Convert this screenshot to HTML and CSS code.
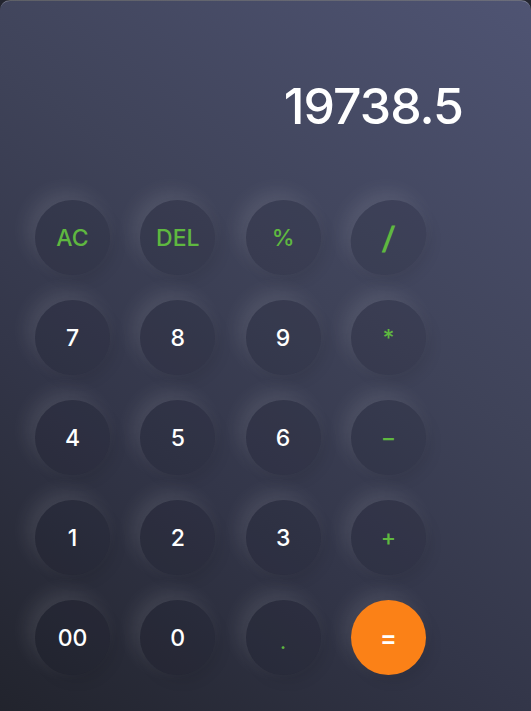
FILE: index.html
```html
<!DOCTYPE html>
<html lang="en">
<head>
<meta charset="utf-8">
<title>Calculator</title>
<link rel="stylesheet" href="styles.css">
</head>
<body>
<div class="calc">
  <div class="display"><span class="value">19738.5</span></div>
  <div class="keys">
    <button class="key op">AC</button>
    <button class="key op">DEL</button>
    <button class="key op">%</button>
    <button class="key op slash">/</button>
    <button class="key">7</button>
    <button class="key">8</button>
    <button class="key">9</button>
    <button class="key op">*</button>
    <button class="key">4</button>
    <button class="key">5</button>
    <button class="key">6</button>
    <button class="key op">−</button>
    <button class="key">1</button>
    <button class="key">2</button>
    <button class="key">3</button>
    <button class="key op">+</button>
    <button class="key">00</button>
    <button class="key">0</button>
    <button class="key op dot">.</button>
    <button class="key equal">=</button>
  </div>
</div>
</body>
</html>
```
FILE: styles.css
```css
* { box-sizing: border-box; }
html, body { margin: 0; padding: 0; background: #23252f; }
body { width: 531px; height: 711px; overflow: hidden; font-family: "Inter", "Open Sans", sans-serif; }

.calc {
  width: 531px;
  height: 720px;
  border-radius: 10px;
  border-top: 1px solid rgba(255,255,255,0.28);
  background: linear-gradient(35deg, #21232c 0%, #333649 35%, #3f4359 60%, #4f5473 100%);
}

.display {
  height: 199px;
  margin: 0 30px;
  padding: 80px 38px 0 0;
  text-align: right;
}
.value {
  color: #ffffff;
  font-size: 50px;
  font-weight: 500;
  letter-spacing: -1px;
  line-height: 1;
}

.keys {
  display: grid;
  grid-template-columns: repeat(4, 75px);
  grid-auto-rows: 75px;
  column-gap: 30.3px;
  row-gap: 25px;
  padding-left: 35px;
}

.key {
  width: 75px;
  height: 75px;
  border: none;
  border-radius: 50%;
  background: rgba(20,22,34,0.14);
  color: #ffffff;
  font-family: inherit;
  font-size: 23px;
  font-weight: 500;
  padding: 0;
  display: flex;
  align-items: center;
  justify-content: center;
  box-shadow: -7px -8px 20px rgba(255,255,255,0.1), 5px 6px 14px rgba(0,0,0,0.08);
}
.op { color: #5fb840; }
.slash { font-size: 31px; font-weight: 600; transform: skewX(-6deg); }
.dot { font-size: 20px; padding-top: 8px; }
.equal {
  background: #fb8117;
  color: #ffffff;
  font-size: 25px;
  font-weight: 600;
}
```
